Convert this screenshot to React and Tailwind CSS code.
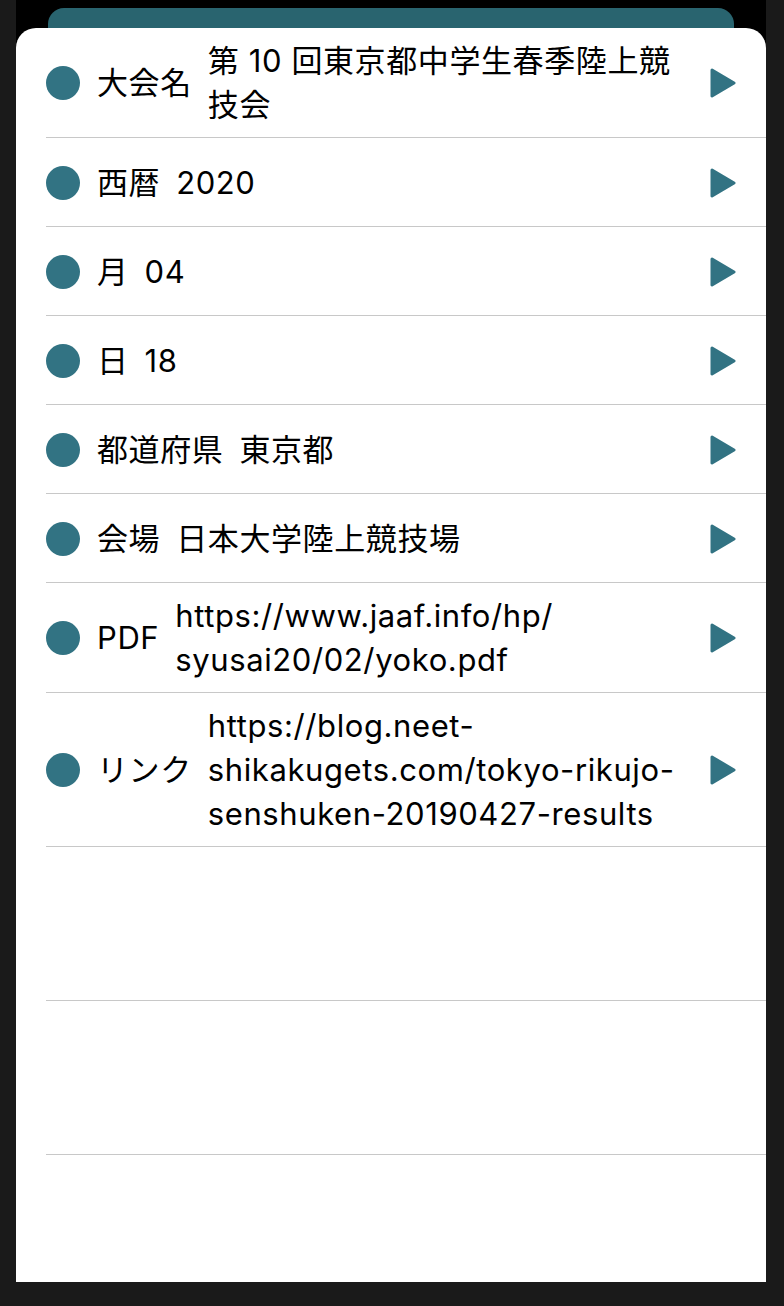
const rows = [
  { label: "大会名", lines: ["第 10 回東京都中学生春季陸上競", "技会"] },
  { label: "西暦", lines: ["2020"] },
  { label: "月", lines: ["04"] },
  { label: "日", lines: ["18"] },
  { label: "都道府県", lines: ["東京都"] },
  { label: "会場", lines: ["日本大学陸上競技場"] },
  { label: "PDF", lines: ["https://www.jaaf.info/hp/", "syusai20/02/yoko.pdf"] },
  {
    label: "リンク",
    lines: [
      "https://blog.neet-",
      "shikakugets.com/tokyo-rikujo-",
      "senshuken-20190427-results",
    ],
  },
];

function Arrow() {
  return (
    <svg width="26" height="30" viewBox="0 0 26 30" className="shrink-0">
      <polygon
        points="2,2 24,15 2,28"
        fill="#327383"
        stroke="#327383"
        strokeWidth="3"
        strokeLinejoin="round"
      />
    </svg>
  );
}

function Row({ label, lines }) {
  return (
    <div className="flex items-center min-h-[89px] pt-[11px] pb-[10px] pr-[30px] border-b border-[#c8c8c8]">
      <div className="w-[34px] h-[34px] rounded-full bg-[#327383] shrink-0" />
      <div className="ml-[17px] shrink-0 whitespace-nowrap">{label}</div>
      <div className="ml-[16px] flex-1 min-w-0">
        {lines.map((l, i) => (
          <div key={i} className="whitespace-nowrap">
            {l}
          </div>
        ))}
      </div>
      <Arrow />
    </div>
  );
}

export default function App() {
  return (
    <div className="min-h-[1306px] bg-[#1a1a1a] px-[16px] pr-[18px]">
      <div className="bg-black pt-[8px]">
        {/* sheet behind */}
        <div className="mx-[32px] h-[20px] rounded-t-[16px] bg-[#29646f]" />

        {/* modal card */}
        <div
          className="h-[1254px] bg-white rounded-t-[20px] overflow-hidden text-[31px] leading-[44px] tracking-[0.6px] text-black"
          style={{ fontFamily: 'Inter, "Noto Sans CJK JP", sans-serif' }}
        >
          <div className="ml-[30px]">
            {rows.map((r) => (
              <Row key={r.label} {...r} />
            ))}
            <div className="h-[154px] border-b border-[#c8c8c8]" />
            <div className="h-[154px] border-b border-[#c8c8c8]" />
          </div>
        </div>
      </div>
    </div>
  );
}
